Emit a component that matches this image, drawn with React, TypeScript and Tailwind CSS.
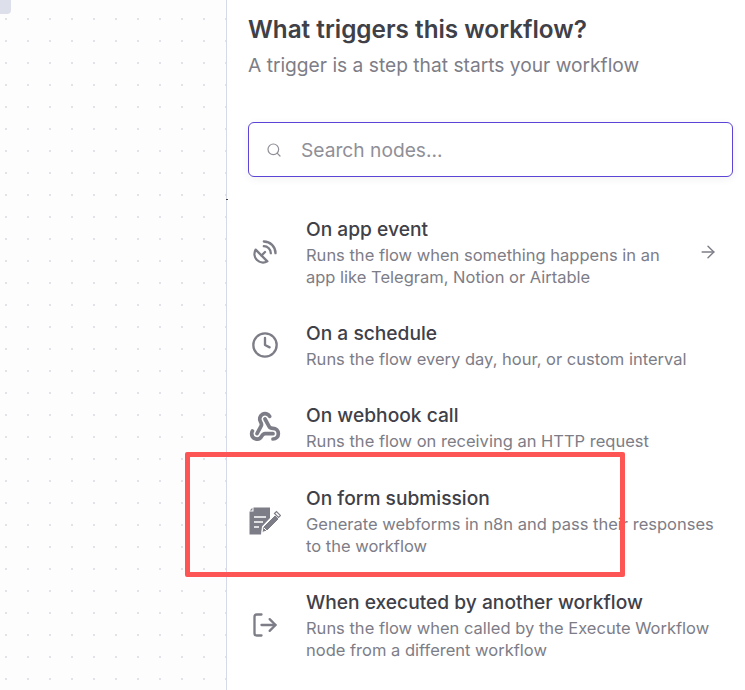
import { ArrowRight, Clock, LogOut, SatelliteDish, Search, Webhook } from "lucide-react";
import type { ReactNode } from "react";

function FormIcon() {
  return (
    <svg viewBox="0 0 32 28" className="h-7 w-8" aria-hidden="true">
      <path d="M4.5 0.5H21V11L13 19.5L12 27.5H0.5V4.5H4.5Z" fill="#7d7d87" />
      <path d="M0.8 3.4L3.4 0.8V3.4Z" fill="#7d7d87" />
      <path d="M5 10H17M5 15H14M5 20H10" stroke="#fff" strokeWidth="1.6" fill="none" />
      <path d="M14 20L26 8L30 12L18 24L13 25.5Z" fill="#7d7d87" stroke="#fff" strokeWidth="1" />
      <path d="M25.5 6.5L27.5 4.5L31.5 8.5L29.5 10.5Z" fill="none" stroke="#7d7d87" strokeWidth="1.2" />
      <path d="M15 21L18 24" stroke="#fff" strokeWidth="1" />
    </svg>
  );
}

function Row({ icon, title, desc, arrow, h }: { icon: ReactNode; title: string; desc: ReactNode; arrow?: boolean; h: string }) {
  return (
    <div className={`flex items-center ${h}`}>
      <div className="flex w-[58px] shrink-0 items-center justify-center pr-[24px] text-[#7d7d87]">{icon}</div>
      <div className="flex-1">
        <div className="text-[19.2px] leading-[26px] font-medium text-[#404048]">{title}</div>
        <div className="mt-[2px] text-[16.5px] leading-[22px] text-[#7d7d87]">{desc}</div>
      </div>
      {arrow && <ArrowRight className="mr-[15px] h-[20px] w-[20px] shrink-0 text-[#7d7d87]" strokeWidth={1.7} />}
    </div>
  );
}

export default function App() {
  return (
    <div className="relative flex h-[690px] w-[745px] overflow-hidden bg-white font-['Inter',sans-serif]">
      <div className="relative w-[226px] shrink-0 bg-[#fdfdfe] bg-[radial-gradient(circle,#e2e3ea_1px,transparent_1.2px)] bg-[size:22px_22px] bg-[position:-5px_8px]">
        <div className="absolute top-0 left-0 h-[14px] w-[11px] rounded-br-[4px] bg-[#dde0ea]" />
        <div className="absolute top-[199px] left-[226px] h-px w-[2px] bg-[#444]" />
      </div>
      <div className="flex-1 border-l border-[#d5d9e8] pt-[12px] pr-[12px] pl-[21px]">
        <h1 className="text-[24.3px] leading-[34px] font-semibold text-[#404048]">What triggers this workflow?</h1>
        <p className="mt-[4px] text-[19.2px] leading-[30px] text-[#7d7d87]">A trigger is a step that starts your workflow</p>
        <div className="mt-[42px] flex h-[55px] items-center rounded-[6px] border border-[#5b45d6] bg-white shadow-[0_2px_8px_rgba(68,28,23,0.06)]">
          <Search className="ml-[17px] h-[16px] w-[16px] text-[#8f8f98]" strokeWidth={1.8} />
          <span className="mt-[2px] ml-[19px] text-[19.2px] text-[#8f8f98]">Search nodes...</span>
        </div>
        <div className="mt-[23px]">
          <Row
            h="h-[104px]"
            arrow
            icon={<SatelliteDish className="h-[28px] w-[28px]" strokeWidth={2} />}
            title="On app event"
            desc={<>Runs the flow when something happens in an<br />app like Telegram, Notion or Airtable</>}
          />
          <Row
            h="h-[82px]"
            icon={<Clock className="h-[28px] w-[28px]" strokeWidth={2} />}
            title="On a schedule"
            desc="Runs the flow every day, hour, or custom interval"
          />
          <Row
            h="h-[82px] mb-[1px]"
            icon={<Webhook className="h-[32px] w-[32px]" strokeWidth={2.8} />}
            title="On webhook call"
            desc="Runs the flow on receiving an HTTP request"
          />
          <Row
            h="h-[104px]"
            icon={<FormIcon />}
            title="On form submission"
            desc={<>Generate webforms in n8n and pass their responses<br />to the workflow</>}
          />
          <Row
            h="h-[104px]"
            icon={<LogOut className="h-[28px] w-[28px] -scale-x-100 rotate-180" strokeWidth={2} />}
            title="When executed by another workflow"
            desc={<>Runs the flow when called by the Execute Workflow<br />node from a different workflow</>}
          />
        </div>
      </div>
      <div className="absolute top-[452px] left-[185px] h-[125px] w-[440px] rounded-[2px] border-[5px] border-[#fd5454]" />
    </div>
  );
}
